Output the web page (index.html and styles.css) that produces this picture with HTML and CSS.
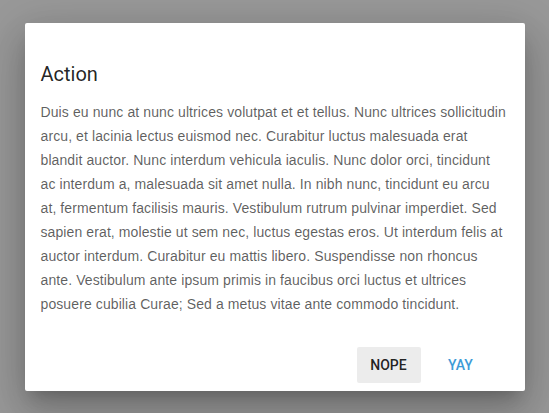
FILE: index.html
```html
<!DOCTYPE html>
<html lang="en">
  <head>
    <meta charset="utf-8">
    <title>Action</title>
    <link rel="stylesheet" href="styles.css">
  </head>
  <body>
    <div class="Dialog">
      <h3 class="Dialog-Title">Action</h3>
      <div class="Dialog-Content">
        Duis eu nunc at nunc ultrices volutpat et et tellus. Nunc ultrices sollicitudin arcu, et lacinia lectus euismod nec. Curabitur luctus malesuada erat blandit auctor. Nunc interdum vehicula iaculis. Nunc dolor orci, tincidunt ac interdum a, malesuada sit amet nulla. In nibh nunc, tincidunt eu arcu at, fermentum facilisis mauris. Vestibulum rutrum pulvinar imperdiet. Sed sapien erat, molestie ut sem nec, luctus egestas eros. Ut interdum felis at auctor interdum. Curabitur eu mattis libero. Suspendisse non rhoncus ante. Vestibulum ante ipsum primis in faucibus orci luctus et ultrices posuere cubilia Curae; Sed a metus vitae ante commodo tincidunt.
      </div>
      <div class="Dialog-Actions">
        <button class="Btn Btn-Nope">Nope</button>
        <button class="Btn Btn-Yay">Yay</button>
      </div>
    </div>
  </body>
</html>
```

FILE: styles.css
```css
body {
  display: flex;
  align-items: center;
  justify-content: center;
  height: 100vh;
  margin: 0;
  padding: 0;
  background: #999999;
}

.Dialog {
  box-sizing: border-box;
  width: 500px;
  padding: 35px 16px 8px 16px;
  background: white;
  border-radius: 2px;
  box-shadow: 0 9px 46px 8px rgba(0, 0, 0, 0.14),
              0 11px 15px -7px rgba(0, 0, 0, 0.2),
              0 24px 38px 3px rgba(0, 0, 0, 0.12);
}

.Dialog-Title {
  margin: 0 0 10px 0;
  font-family: Roboto, sans-serif;
  font-size: 20px;
  font-weight: 400;
  line-height: 32px;
  color: rgba(0, 0, 0, 0.87);
}

.Dialog-Content {
  font-family: 'Liberation Sans', Arial, sans-serif;
  font-size: 14px;
  line-height: 24px;
  letter-spacing: 0.1px;
  color: rgba(0, 0, 0, 0.64);
}

.Dialog-Actions {
  display: flex;
  justify-content: flex-end;
  gap: 8px;
  margin-top: 31px;
  padding-right: 16px;
}

.Btn {
  min-width: 64px;
  height: 36px;
  padding: 0 8px;
  border: none;
  border-radius: 2px;
  background: transparent;
  font-family: Roboto, sans-serif;
  font-size: 14px;
  font-weight: 500;
  text-transform: uppercase;
}

.Btn-Nope {
  background: #ececec;
  color: rgba(0, 0, 0, 0.87);
}

.Btn-Yay {
  color: #3d9bd7;
}
```
